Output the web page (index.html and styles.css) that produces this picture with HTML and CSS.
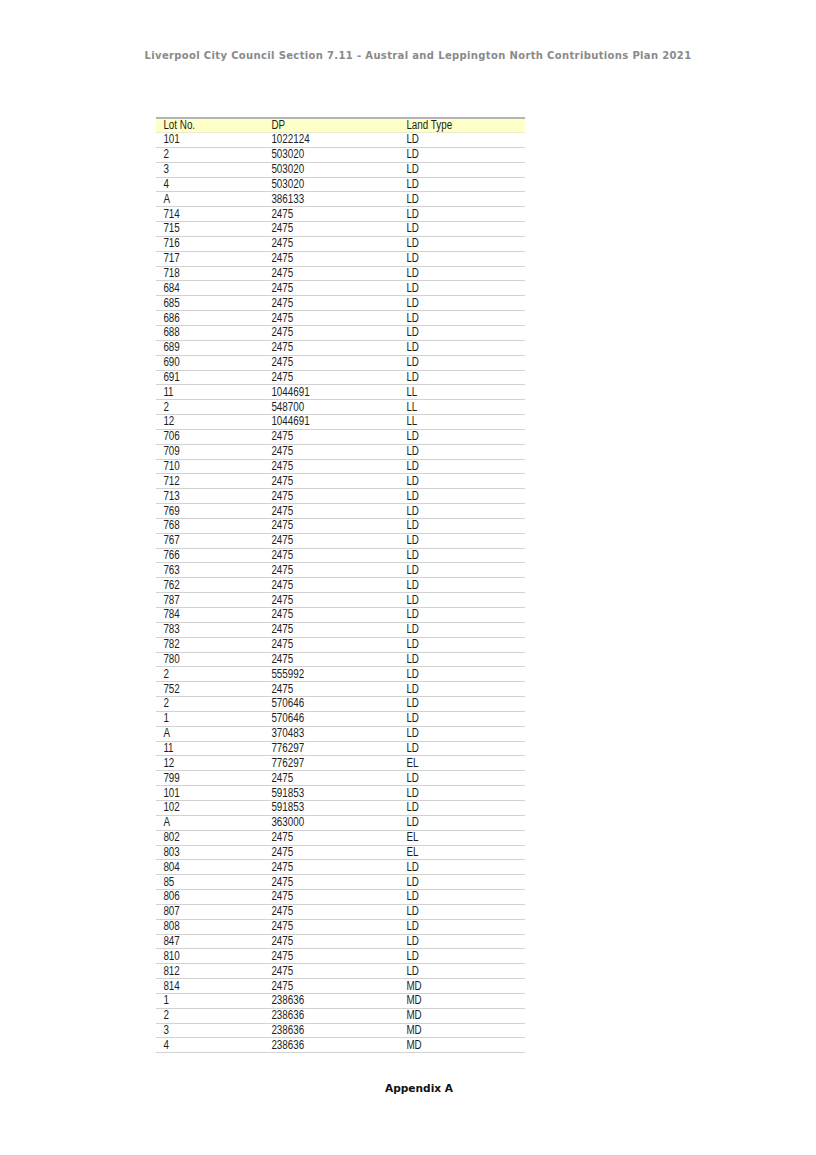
FILE: index.html
```html
<!DOCTYPE html>
<html>
<head>
<meta charset="utf-8">
<link rel="stylesheet" href="styles.css">
</head>
<body>
<div class="page">
  <div class="running-head">Liverpool City Council Section 7.11 - Austral and Leppington North Contributions Plan 2021</div>
  <table class="lots">
    <colgroup><col class="c1"><col class="c2"><col class="c3"></colgroup>
    <thead>
      <tr><th>Lot No.</th><th>DP</th><th>Land Type</th></tr>
    </thead>
    <tbody>
<tr><td>101</td><td>1022124</td><td>LD</td></tr>
<tr><td>2</td><td>503020</td><td>LD</td></tr>
<tr><td>3</td><td>503020</td><td>LD</td></tr>
<tr><td>4</td><td>503020</td><td>LD</td></tr>
<tr><td>A</td><td>386133</td><td>LD</td></tr>
<tr><td>714</td><td>2475</td><td>LD</td></tr>
<tr><td>715</td><td>2475</td><td>LD</td></tr>
<tr><td>716</td><td>2475</td><td>LD</td></tr>
<tr><td>717</td><td>2475</td><td>LD</td></tr>
<tr><td>718</td><td>2475</td><td>LD</td></tr>
<tr><td>684</td><td>2475</td><td>LD</td></tr>
<tr><td>685</td><td>2475</td><td>LD</td></tr>
<tr><td>686</td><td>2475</td><td>LD</td></tr>
<tr><td>688</td><td>2475</td><td>LD</td></tr>
<tr><td>689</td><td>2475</td><td>LD</td></tr>
<tr><td>690</td><td>2475</td><td>LD</td></tr>
<tr><td>691</td><td>2475</td><td>LD</td></tr>
<tr><td>11</td><td>1044691</td><td>LL</td></tr>
<tr><td>2</td><td>548700</td><td>LL</td></tr>
<tr><td>12</td><td>1044691</td><td>LL</td></tr>
<tr><td>706</td><td>2475</td><td>LD</td></tr>
<tr><td>709</td><td>2475</td><td>LD</td></tr>
<tr><td>710</td><td>2475</td><td>LD</td></tr>
<tr><td>712</td><td>2475</td><td>LD</td></tr>
<tr><td>713</td><td>2475</td><td>LD</td></tr>
<tr><td>769</td><td>2475</td><td>LD</td></tr>
<tr><td>768</td><td>2475</td><td>LD</td></tr>
<tr><td>767</td><td>2475</td><td>LD</td></tr>
<tr><td>766</td><td>2475</td><td>LD</td></tr>
<tr><td>763</td><td>2475</td><td>LD</td></tr>
<tr><td>762</td><td>2475</td><td>LD</td></tr>
<tr><td>787</td><td>2475</td><td>LD</td></tr>
<tr><td>784</td><td>2475</td><td>LD</td></tr>
<tr><td>783</td><td>2475</td><td>LD</td></tr>
<tr><td>782</td><td>2475</td><td>LD</td></tr>
<tr><td>780</td><td>2475</td><td>LD</td></tr>
<tr><td>2</td><td>555992</td><td>LD</td></tr>
<tr><td>752</td><td>2475</td><td>LD</td></tr>
<tr><td>2</td><td>570646</td><td>LD</td></tr>
<tr><td>1</td><td>570646</td><td>LD</td></tr>
<tr><td>A</td><td>370483</td><td>LD</td></tr>
<tr><td>11</td><td>776297</td><td>LD</td></tr>
<tr><td>12</td><td>776297</td><td>EL</td></tr>
<tr><td>799</td><td>2475</td><td>LD</td></tr>
<tr><td>101</td><td>591853</td><td>LD</td></tr>
<tr><td>102</td><td>591853</td><td>LD</td></tr>
<tr><td>A</td><td>363000</td><td>LD</td></tr>
<tr><td>802</td><td>2475</td><td>EL</td></tr>
<tr><td>803</td><td>2475</td><td>EL</td></tr>
<tr><td>804</td><td>2475</td><td>LD</td></tr>
<tr><td>85</td><td>2475</td><td>LD</td></tr>
<tr><td>806</td><td>2475</td><td>LD</td></tr>
<tr><td>807</td><td>2475</td><td>LD</td></tr>
<tr><td>808</td><td>2475</td><td>LD</td></tr>
<tr><td>847</td><td>2475</td><td>LD</td></tr>
<tr><td>810</td><td>2475</td><td>LD</td></tr>
<tr><td>812</td><td>2475</td><td>LD</td></tr>
<tr><td>814</td><td>2475</td><td>MD</td></tr>
<tr><td>1</td><td>238636</td><td>MD</td></tr>
<tr><td>2</td><td>238636</td><td>MD</td></tr>
<tr><td>3</td><td>238636</td><td>MD</td></tr>
<tr><td>4</td><td>238636</td><td>MD</td></tr>
    </tbody>
  </table>
  <div class="footer">Appendix A</div>
</div>
</body>
</html>
```
FILE: styles.css
```css
html, body {
  margin: 0;
  padding: 0;
  background: #ffffff;
}

.page {
  width: 816px;
  height: 1155px;
  box-sizing: border-box;
  padding-top: 49px;
  display: flex;
  flex-direction: column;
  align-items: flex-start;
}

.running-head {
  align-self: stretch;
  text-align: center;
  padding-left: 20px;
  font-family: "DejaVu Sans", Verdana, sans-serif;
  font-weight: bold;
  font-size: 10px;
  letter-spacing: 0.35px;
  line-height: 14px;
  color: #8a8a8a;
}

.lots {
  margin-top: 54px;
  margin-left: 156px;
  width: 369px;
  border-collapse: collapse;
  table-layout: fixed;
  font-family: "Liberation Sans", Arial, sans-serif;
  font-size: 12px;
  color: #1e1e1e;
}

.lots .c1 { width: 108px; }
.lots .c2 { width: 135px; }
.lots .c3 { width: 126px; }

.lots th, .lots td {
  padding: 0 0 0 9px;
  text-align: left;
  font-weight: normal;
  white-space: nowrap;
  line-height: 13px;
  transform: scaleX(0.82);
  transform-origin: 0 50%;
}

.lots thead tr {
  background: #ffffc8;
  border-top: 2px solid #b4b4b4;
  border-bottom: 1px solid #ececcc;
}

.lots thead th {
  height: 13px;
}

.lots tbody tr {
  border-bottom: 1px solid #d2d2d2;
}

.lots tbody td {
  height: 13.85px;
  vertical-align: middle;
}

.footer {
  margin-top: 29px;
  align-self: stretch;
  text-align: center;
  padding-left: 22px;
  font-family: "DejaVu Sans", Verdana, sans-serif;
  font-weight: bold;
  font-size: 10.6px;
  color: #111111;
}
```
